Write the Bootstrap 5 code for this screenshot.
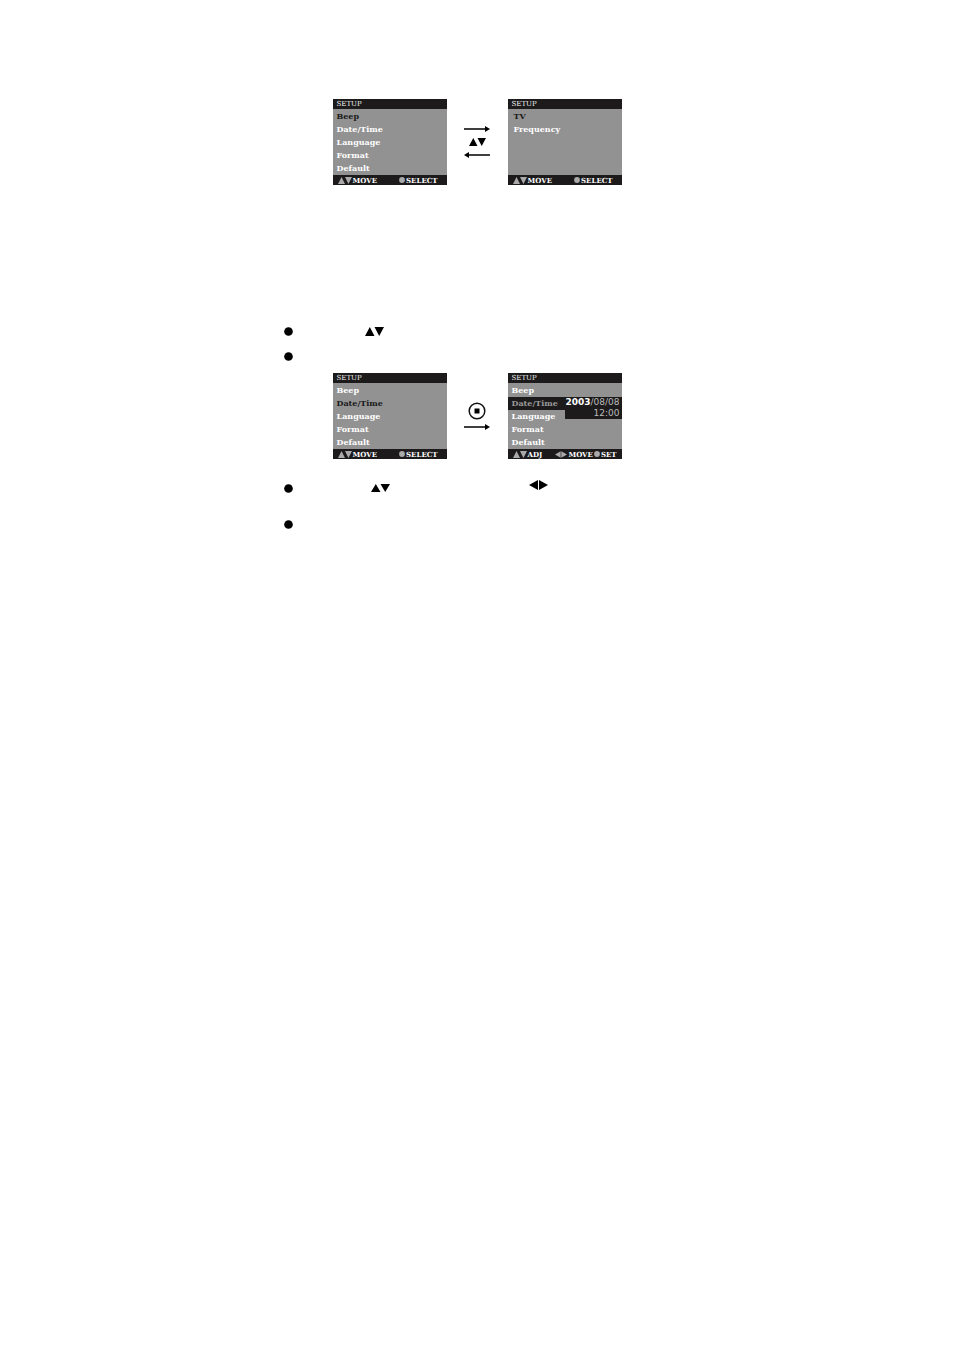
<!DOCTYPE html>
<html lang="en">
<head>
<meta charset="utf-8">
<meta name="viewport" content="width=device-width, initial-scale=1">
<title>Setup menu: Date/Time</title>
<link href="https://cdn.jsdelivr.net/npm/bootstrap@5.3.0/dist/css/bootstrap.min.css" rel="stylesheet">
<style>
body{background:#fff;color:#000;font-family:"DejaVu Serif",serif;font-size:8px}
.manual{max-width:386px;padding-top:99px}
svg{display:block;flex:none}
.screens{margin-bottom:138px}
.screens-second{margin-bottom:21px}
.lcd{width:114px;background:#929292;color:#fff;font-weight:700}
.lcd-bar{height:10px;line-height:11px;background:#1c1a1b;padding:0 4px}
.lcd-title{font-weight:400;font-size:7px;color:#eee}
.lcd-foot{padding:0 5px;font-size:7px}
.lcd-foot span{gap:1px}
.tri{fill:#aaa}
.lcd-menu{height:66px;padding-top:1px}
.lcd-menu li{height:13px;line-height:13px;padding:0 4px}
.lcd-menu.lcd-inset li{padding-left:6px}
.lcd-menu .chosen{color:#1a1a1a}
.lcd-menu .editing{background:#1c1a1b;color:#999}
.stamp{right:0;top:0;width:57px;height:22px;padding-right:2px;background:#1c1a1b;color:#bbb;font-family:"DejaVu Sans",sans-serif;font-size:9px;font-weight:400;line-height:11px;white-space:nowrap}
.stamp b{color:#fff}
.between{width:61px}
.arrows{gap:6px}
.notes li{height:25px}
.notes .tall{height:36px}
.near{margin-left:72px}
.far{margin-left:78px}
.side{margin-left:139px}
</style>
</head>
<body>
<svg width="0" height="0" class="position-absolute" aria-hidden="true">
<symbol id="updown" viewBox="0 0 19 9" preserveAspectRatio="none"><path d="M0 9L4.800 0L9.500 9ZM9.500 0H19L14.200 9Z"/></symbol>
<symbol id="sides" viewBox="0 0 19 10"><path d="M9 0V10L0 5ZM10 0V10L19 5Z"/></symbol>
<symbol id="arrow" viewBox="0 0 26 6"><path d="M0 2.200H21V0L26 3L21 6V3.800H0Z"/></symbol>
<symbol id="dot" viewBox="0 0 10 10"><circle cx="5" cy="5" r="4.800"/></symbol>
</svg>
<main class="manual mx-auto">
<section class="screens d-flex justify-content-center">
<div class="lcd">
<div class="lcd-bar lcd-title">SETUP</div>
<ul class="lcd-menu list-unstyled mb-0"><li class="chosen">Beep</li><li>Date/Time</li><li>Language</li><li>Format</li><li>Default</li></ul>
<div class="lcd-bar lcd-foot d-flex justify-content-between"><span class="d-flex align-items-center"><svg class="tri" width="14" height="7"><use href="#updown"/></svg>MOVE</span><span class="d-flex align-items-center pe-1"><svg class="tri" width="6" height="6"><use href="#dot"/></svg>SELECT</span></div>
</div>
<div class="between arrows d-flex flex-column align-items-center justify-content-center">
<svg width="26" height="6"><use href="#arrow"/></svg>
<svg width="17" height="8"><use href="#updown"/></svg>
<svg width="26" height="6" viewBox="0 0 26 6"><path d="M26 2.200H5V0L0 3L5 6V3.800H26Z"/></svg>
</div>
<div class="lcd">
<div class="lcd-bar lcd-title">SETUP</div>
<ul class="lcd-menu lcd-inset list-unstyled mb-0"><li class="chosen">TV</li><li>Frequency</li></ul>
<div class="lcd-bar lcd-foot d-flex justify-content-between"><span class="d-flex align-items-center"><svg class="tri" width="14" height="7"><use href="#updown"/></svg>MOVE</span><span class="d-flex align-items-center pe-1"><svg class="tri" width="6" height="6"><use href="#dot"/></svg>SELECT</span></div>
</div>
</section>
<ul class="notes list-unstyled mb-0">
<li class="d-flex"><svg class="mt-1" width="9" height="9"><use href="#dot"/></svg><svg class="near mt-1" width="19" height="9"><use href="#updown"/></svg></li>
<li class="d-flex"><svg class="mt-1" width="9" height="9"><use href="#dot"/></svg></li>
</ul>
<section class="screens-second d-flex justify-content-center">
<div class="lcd">
<div class="lcd-bar lcd-title">SETUP</div>
<ul class="lcd-menu list-unstyled mb-0"><li>Beep</li><li class="chosen">Date/Time</li><li>Language</li><li>Format</li><li>Default</li></ul>
<div class="lcd-bar lcd-foot d-flex justify-content-between"><span class="d-flex align-items-center"><svg class="tri" width="14" height="7"><use href="#updown"/></svg>MOVE</span><span class="d-flex align-items-center pe-1"><svg class="tri" width="6" height="6"><use href="#dot"/></svg>SELECT</span></div>
</div>
<div class="between d-flex flex-column align-items-center justify-content-center gap-1">
<svg width="18" height="18" viewBox="0 0 18 18"><circle cx="9" cy="9" r="7.800" fill="none" stroke="#111" stroke-width="1.500"/><path d="M6.500 6.500H11.500V11.500H6.500Z"/></svg>
<svg width="26" height="6"><use href="#arrow"/></svg>
</div>
<div class="lcd">
<div class="lcd-bar lcd-title">SETUP</div>
<ul class="lcd-menu list-unstyled mb-0"><li>Beep</li><li class="editing position-relative">Date/Time<div class="stamp position-absolute text-end"><b>2003</b>/08/08<br>12:00</div></li><li>Language</li><li>Format</li><li>Default</li></ul>
<div class="lcd-bar lcd-foot d-flex justify-content-between"><span class="d-flex align-items-center"><svg class="tri" width="14" height="7"><use href="#updown"/></svg>ADJ</span><span class="d-flex align-items-center"><svg class="tri" width="12" height="7"><use href="#sides"/></svg>MOVE<svg class="tri" width="6" height="6"><use href="#dot"/></svg>SET</span></div>
</div>
</section>
<ul class="notes list-unstyled mb-0">
<li class="tall d-flex"><svg class="mt-1" width="9" height="9"><use href="#dot"/></svg><svg class="far mt-1" width="19" height="8"><use href="#updown"/></svg><svg class="side" width="19" height="10"><use href="#sides"/></svg></li>
<li class="d-flex"><svg class="mt-1" width="9" height="9"><use href="#dot"/></svg></li>
</ul>
</main>
<script src="https://cdn.jsdelivr.net/npm/bootstrap@5.3.0/dist/js/bootstrap.bundle.min.js"></script>
</body>
</html>
